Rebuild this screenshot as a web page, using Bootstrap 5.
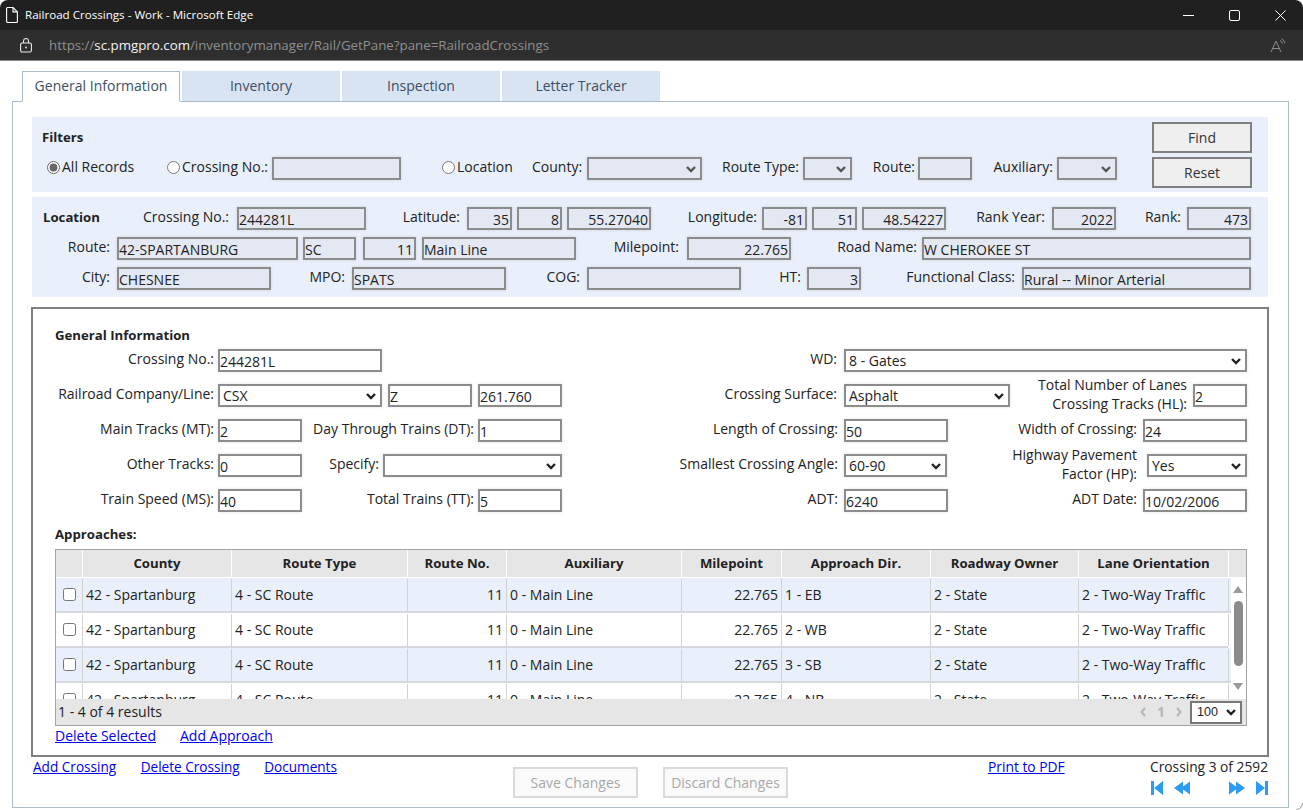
<!DOCTYPE html>
<html lang="en">
<head>
<meta charset="utf-8">
<title>Railroad Crossings</title>
<link rel="stylesheet" href="https://cdn.jsdelivr.net/npm/bootstrap@5.3.0/dist/css/bootstrap.min.css">
<style>
html,body{height:810px;overflow:hidden;background:#fff}
body{font-family:"Open Sans","Liberation Sans",sans-serif;font-size:14px;color:#222;line-height:20px;position:relative}
.titlebar{height:30px;background:#202020;color:#fff;font-size:11.6px;border-radius:8px 8px 0 0;padding:0 0 0 6px}
.titlebar .ttl{margin-left:7px}
.addrbar{height:31px;background:#2e2e2e;border-bottom:1px solid #8a8a8a;color:#8f8f8f;font-size:13.3px;padding:0 16px 0 20px}
.addrbar .url{margin-left:17px}
.addrbar b{font-weight:400;color:#f2f2f2}
.winbtn{width:46px}
.content{padding:10px 14px 0 12px}
.nav-tabs{margin-left:10px;border:0;gap:2px;position:relative;z-index:1;margin-bottom:-1px}
.nav-tabs .nav-link{width:158px;height:31px;margin:0;padding:5px 0 0;text-align:center;background:#d9e4f2;color:#3d4f63;border:0;border-bottom:1px solid #a9bacb;border-radius:0;font-size:14px}
.nav-tabs .nav-link.active{background:#fff;color:#3d4f63;border:1px solid #a9bacb;border-bottom:1px solid #fff;padding-top:4px}
.panel{height:707px;border:1px solid #a9bacb;padding:15px 20px 0 19px}
.block{background:#e9f0fb}
.filters{height:75px;padding:5px 16px 0 15px}
.filters h6{margin:5px 0 10px -5px;font-size:13.2px;font-weight:700;line-height:20px}
.location{height:100px;margin-top:5px;padding:10px 0 0 11px}
.frow{height:23px;margin-bottom:7px}
.grow{height:23px;margin-bottom:12px}
.form-control,.form-select{height:23px;min-height:0;padding:1px 1px 0 0;font-size:14px;line-height:19px;color:#222;border:2px solid #8c8c8c;border-radius:0;background-color:#fff;box-shadow:0 0 3px rgba(0,0,0,.12);flex:none}
.form-select{padding:0 18px 0 3px;background-position:right 3px center;background-size:12px 10px;background-image:url("data:image/svg+xml,%3csvg xmlns='http://www.w3.org/2000/svg' viewBox='0 0 12 10'%3e%3cpath fill='none' stroke='%23222' stroke-width='2.4' d='M2 3l4 4 4-4'/%3e%3c/svg%3e")}
.ro{background-color:#e4e8f3}
.block .form-select{background-color:#e4e8f3;background-image:url("data:image/svg+xml,%3csvg xmlns='http://www.w3.org/2000/svg' viewBox='0 0 12 10'%3e%3cpath fill='none' stroke='%23555' stroke-width='2.4' d='M2 3l4 4 4-4'/%3e%3c/svg%3e")}
label,.lab{flex:none;margin:0;white-space:nowrap;padding-bottom:3px}
.lab{font-size:13.2px;margin-left:0}
.location .frow label{padding-bottom:4px}
.rad{display:flex;align-items:center;gap:2px}
.rad input{margin:0;width:13px;height:13px;accent-color:#666}
.btn-side{display:block;width:100px;height:31px;background:#efefef;color:#333;border:2px solid #808080;border-radius:0;padding:0;font-size:14px;margin-bottom:4px}
.btn-side:hover{background:#efefef;color:#333;border-color:#808080}
.genbox{height:450px;margin:10px -1px 0 -1px;border:2px solid #7f7f7f;padding:16px 0 0 22px}
.genbox h6{font-size:13.2px;font-weight:700;line-height:20px;margin:0 0 4px}
.approach{font-size:13.2px;font-weight:700;line-height:20px;margin:0 0 5px}
.grid{width:1192px;height:177px;border:1px solid #a3a3a3;background:#fff}
.ghead{height:27px;background:#e6e6e6;font-size:13.2px;font-weight:700;margin-bottom:1px}
.ghead>div{height:27px;border-right:1px solid #fff;text-align:center;line-height:27px;flex:none}
.gbody{height:121px;overflow:hidden}
.gtable{width:1172px;flex:none}
.grid-row{height:35px;border-bottom:2px solid #d5d8df;padding-top:1px}
.grid-row.alt{background:#e9f0fb;margin-right:-3px}
.grid-row>div{height:32px;border-right:1px solid #d3d3d3;padding:6px 3px 0;flex:none;white-space:nowrap}
.grid-row input{margin:3px 0 0 4px;width:13px;height:13px}
.c0{width:27px}.c1{width:149px}.c2{width:176px}.c3{width:99px}.c4{width:175px}.c5{width:100px}.c6{width:149px}.c7{width:148px}.c8{width:150px}
.sbar{width:18px;flex:none;padding-top:7px}
.sbar i{display:block;width:9px;height:65px;background:#8b8b8b;border-radius:5px;margin:7px 0 16px 6px}
.sbar svg{display:block;margin-left:5px}
.gfoot{height:26px;background:#e6e6e6;padding:0 4px 0 2px}
.pager{color:#b5b5b5;font-weight:700;width:42px}
.pgsel{width:52px;height:23px;padding:0 14px 0 5px;margin-left:8px;font-family:"Liberation Sans",sans-serif;font-size:12.5px;border-width:2px;border-color:#777;box-shadow:none;line-height:19px}
.sublinks{height:31px;line-height:20px}
a,a:hover{color:#00e}
.bottom{padding-left:1px}
.botlinks{width:480px;gap:24.5px;font-size:13.6px}
.btn-dis,.btn-dis:disabled{width:125px;height:31px;margin-top:10px;background:#fafafa;color:#a8a8a8;border:2px solid #dadada;border-radius:0;padding:0;font-size:14px;opacity:1}
.ml25{margin-left:25px}
.pdf{margin-left:200px;width:161px;font-size:13.8px}
.crossing{width:119px;text-align:right;white-space:nowrap;font-size:13.75px}
.navs{height:14px;margin-top:4px}
.nav1{margin-left:2px}.nav2{margin-left:11px}.nav4{margin-left:11px}
.corner{position:absolute;right:0;bottom:0;width:7px;height:7px;border-right:1px solid #aaa;border-bottom:1px solid #aaa;border-bottom-right-radius:8px}
.w45{width:45px}.w49{width:49px}.w53{width:53px}.w54{width:54px}.w55{width:55px}.w60{width:60px}.w64{width:64px}.w66{width:66px}.w71{width:71px}.w74{width:74px}
.w81{width:81px}.w84{width:84px}.w85{width:85px}.w95{width:95px}.w99{width:99px}.w100{width:100px}.w101{width:101px}.w103{width:103px}.w104{width:104px}.w105{width:105px}.w106{width:106px}.w111{width:111px}.w115{width:115px}
.w120{width:120px}.w129{width:129px}.w131{width:131px}.w154{width:154px}.w161{width:161px}.w163{width:163px}.w164{width:164px}.w166{width:166px}.w176{width:176px}.w179{width:179px}.w181{width:181px}.w183{width:183px}.w195{width:195px}.w200{width:200px}.w229{width:229px}.w282{width:282px}.w329{width:329px}.w403{width:403px}.w462{width:462px}
.ml5{margin-left:5px}.ml6{margin-left:6px}.ml7{margin-left:7px}
.p3r{padding-right:3px}.p4r{padding-right:4px}.p5r{padding-right:5px}.p6r{padding-right:6px}.p7r{padding-right:7px}.p8r{padding-right:8px}.p10r{padding-right:10px}
.two{line-height:19.5px}
.locpad{padding-left:41px}
</style>
</head>
<body>
<div class="titlebar d-flex align-items-center">
  <svg width="12" height="16" viewBox="0 0 12 16" fill="none" stroke="#fff" stroke-width="1.1"><path d="M.6 1.5a1 1 0 0 1 1-1h5.400l4.400 4.400v9.600a1 1 0 0 1-1 1h-8.800a1 1 0 0 1-1-1z"/><path d="M7 .5v4.400h4.400"/></svg>
  <span class="ttl flex-grow-1">Railroad Crossings - Work - Microsoft Edge</span>
  <div class="winbtn text-center"><svg width="11" height="11" viewBox="0 0 11 11" stroke="#fff"><path d="M0 5.500h11"/></svg></div>
  <div class="winbtn text-center"><svg width="11" height="11" viewBox="0 0 11 11" fill="none" stroke="#fff"><rect x=".5" y=".5" width="10" height="10" rx="1.5"/></svg></div>
  <div class="winbtn text-center"><svg width="11" height="11" viewBox="0 0 11 11" stroke="#fff"><path d="M.5.5l10 10M10.500.5l-10 10"/></svg></div>
</div>
<div class="addrbar d-flex align-items-center">
  <svg width="12" height="15" viewBox="0 0 12 15" fill="none" stroke="#e8e8e8" stroke-width="1.1"><rect x=".6" y="5" width="10.800" height="9" rx="1.500"/><path d="M3.500 5V3a2.500 2.500 0 0 1 5 0v2"/><circle cx="6" cy="9.500" r=".9" fill="#e8e8e8" stroke="none"/></svg>
  <span class="url flex-grow-1">https://<b>sc.pmgpro.com</b>/inventorymanager/Rail/GetPane?pane=RailroadCrossings</span>
  <svg width="17" height="15" viewBox="0 0 17 15" fill="none" stroke="#8f8f8f" stroke-width="1"><path d="M1 14L6 3l5 11M2.800 10.500h6.400"/><path d="M10 2.500a4 4 0 0 1 2.500 3M11.500 .8a6 6 0 0 1 3.500 4.500"/></svg>
</div>
<div class="content">
  <ul class="nav nav-tabs">
    <li class="nav-item"><a class="nav-link active" href="#">General Information</a></li>
    <li class="nav-item"><a class="nav-link" href="#">Inventory</a></li>
    <li class="nav-item"><a class="nav-link" href="#">Inspection</a></li>
    <li class="nav-item"><a class="nav-link" href="#">Letter Tracker</a></li>
  </ul>
  <div class="panel">
    <div class="block filters d-flex">
      <div class="flex-grow-1">
        <h6>Filters</h6>
        <div class="d-flex align-items-center">
          <label class="rad w120"><input type="radio" name="f" checked>All Records</label>
          <label class="rad w105"><input type="radio" name="f">Crossing No.:</label>
          <input class="form-control ro w129" type="text">
          <label class="rad w131 locpad"><input type="radio" name="f">Location</label>
          <label class="w55">County:</label>
          <select class="form-select w115"><option></option></select>
          <label class="w101 text-end p4r">Route Type:</label>
          <select class="form-select w49"><option></option></select>
          <label class="w66 text-end p3r">Route:</label>
          <input class="form-control ro w54" type="text">
          <label class="w85 text-end p4r">Auxiliary:</label>
          <select class="form-select w60"><option></option></select>
        </div>
      </div>
      <div>
        <button class="btn btn-side" type="button">Find</button>
        <button class="btn btn-side" type="button">Reset</button>
      </div>
    </div>
    <div class="block location">
      <div class="frow d-flex align-items-center">
        <b class="lab w99">Location</b>
        <label class="w95 text-end p8r">Crossing No.:</label><input class="form-control ro w129" value="244281L">
        <label class="w101 text-end p7r">Latitude:</label><input class="form-control ro w45 text-end" value="35"><input class="form-control ro w45 text-end ml5" value="8"><input class="form-control ro w84 text-end ml5" value="55.27040">
        <label class="w111 text-end p5r">Longitude:</label><input class="form-control ro w45 text-end" value="-81"><input class="form-control ro w45 text-end ml5" value="51"><input class="form-control ro w84 text-end ml5" value="48.54227">
        <label class="w106 text-end p7r">Rank Year:</label><input class="form-control ro w64 text-end" value="2022">
        <label class="w71 text-end p6r">Rank:</label><input class="form-control ro w64 text-end" value="473">
      </div>
      <div class="frow d-flex align-items-center">
        <label class="w74 text-end p7r">Route:</label><input class="form-control ro w181" value="42-SPARTANBURG"><input class="form-control ro w53 ml5" value="SC"><input class="form-control ro w53 ml7 text-end" value="11"><input class="form-control ro w154 ml6" value="Main Line">
        <label class="w111 text-end p8r">Milepoint:</label><input class="form-control ro w104 text-end" value="22.765">
        <label class="w131 text-end p5r">Road Name:</label><input class="form-control ro w329" value="W CHEROKEE ST">
      </div>
      <div class="frow d-flex align-items-center">
        <label class="w74 text-end p7r">City:</label><input class="form-control ro w154" value="CHESNEE">
        <label class="w81 text-end p7r">MPO:</label><input class="form-control ro w154" value="SPATS">
        <label class="w81 text-end p7r">COG:</label><input class="form-control ro w154" value="">
        <label class="w66 text-end p6r">HT:</label><input class="form-control ro w54 text-end" value="3">
        <label class="w161 text-end p7r">Functional Class:</label><input class="form-control ro w229" value="Rural -- Minor Arterial">
      </div>
    </div>
    <div class="genbox">
      <h6>General Information</h6>
      <div class="grow d-flex align-items-center">
        <label class="w163 text-end p4r">Crossing No.:</label><input class="form-control w164" value="244281L">
        <label class="w462 text-end p7r">WD:</label><select class="form-select w403"><option>8 - Gates</option></select>
      </div>
      <div class="grow d-flex align-items-center">
        <label class="w163 text-end p4r">Railroad Company/Line:</label><select class="form-select w164"><option>CSX</option></select><input class="form-control w84 ml6" value="Z"><input class="form-control w84 ml6" value="261.760">
        <label class="w282 text-end p7r">Crossing Surface:</label><select class="form-select w166"><option>Asphalt</option></select>
        <label class="w183 text-end p6r two">Total Number of Lanes<br>Crossing Tracks (HL):</label><input class="form-control w54" value="2">
      </div>
      <div class="grow d-flex align-items-center">
        <label class="w163 text-end p4r">Main Tracks (MT):</label><input class="form-control w84" value="2">
        <label class="w176 text-end p4r">Day Through Trains (DT):</label><input class="form-control w84" value="1">
        <label class="w282 text-end p6r">Length of Crossing:</label><input class="form-control w104" value="50">
        <label class="w195 text-end p6r">Width of Crossing:</label><input class="form-control w104" value="24">
      </div>
      <div class="grow d-flex align-items-center">
        <label class="w163 text-end p4r">Other Tracks:</label><input class="form-control w84" value="0">
        <label class="w81 text-end p4r">Specify:</label><select class="form-select w179"><option></option></select>
        <label class="w282 text-end p6r">Smallest Crossing Angle:</label><select class="form-select w103"><option>60-90</option></select>
        <label class="w200 text-end p10r two">Highway Pavement<br>Factor (HP):</label><select class="form-select w100"><option>Yes</option></select>
      </div>
      <div class="grow d-flex align-items-center">
        <label class="w163 text-end p4r">Train Speed (MS):</label><input class="form-control w84" value="40">
        <label class="w176 text-end p4r">Total Trains (TT):</label><input class="form-control w84" value="5">
        <label class="w282 text-end p6r">ADT:</label><input class="form-control w104" value="6240">
        <label class="w195 text-end p6r">ADT Date:</label><input class="form-control w104" value="10/02/2006">
      </div>
      <div class="approach">Approaches:</div>
      <div class="grid">
        <div class="ghead d-flex">
          <div class="c0"></div><div class="c1">County</div><div class="c2">Route Type</div><div class="c3">Route No.</div><div class="c4">Auxiliary</div><div class="c5">Milepoint</div><div class="c6">Approach Dir.</div><div class="c7">Roadway Owner</div><div class="c8">Lane Orientation</div>
        </div>
        <div class="gbody d-flex">
          <div class="gtable">
            <div class="grid-row alt d-flex"><div class="c0"><input type="checkbox"></div><div class="c1">42 - Spartanburg</div><div class="c2">4 - SC Route</div><div class="c3 text-end">11</div><div class="c4">0 - Main Line</div><div class="c5 text-end">22.765</div><div class="c6">1 - EB</div><div class="c7">2 - State</div><div class="c8">2 - Two-Way Traffic</div></div>
            <div class="grid-row d-flex"><div class="c0"><input type="checkbox"></div><div class="c1">42 - Spartanburg</div><div class="c2">4 - SC Route</div><div class="c3 text-end">11</div><div class="c4">0 - Main Line</div><div class="c5 text-end">22.765</div><div class="c6">2 - WB</div><div class="c7">2 - State</div><div class="c8">2 - Two-Way Traffic</div></div>
            <div class="grid-row alt d-flex"><div class="c0"><input type="checkbox"></div><div class="c1">42 - Spartanburg</div><div class="c2">4 - SC Route</div><div class="c3 text-end">11</div><div class="c4">0 - Main Line</div><div class="c5 text-end">22.765</div><div class="c6">3 - SB</div><div class="c7">2 - State</div><div class="c8">2 - Two-Way Traffic</div></div>
            <div class="grid-row d-flex"><div class="c0"><input type="checkbox"></div><div class="c1">42 - Spartanburg</div><div class="c2">4 - SC Route</div><div class="c3 text-end">11</div><div class="c4">0 - Main Line</div><div class="c5 text-end">22.765</div><div class="c6">4 - NB</div><div class="c7">2 - State</div><div class="c8">2 - Two-Way Traffic</div></div>
          </div>
          <div class="sbar">
            <svg width="10" height="9" viewBox="0 0 10 9"><path d="M5 1l5 7H0z" fill="#9a9a9a"/></svg>
            <i></i>
            <svg width="10" height="9" viewBox="0 0 10 9"><path d="M0 1h10L5 8z" fill="#9a9a9a"/></svg>
          </div>
        </div>
        <div class="gfoot d-flex align-items-center justify-content-between">
          <span>1 - 4 of 4 results</span>
          <div class="d-flex align-items-center">
            <div class="pager d-flex justify-content-between align-items-center">
              <svg width="6" height="10" viewBox="0 0 6 10" fill="none" stroke="#b5b5b5" stroke-width="2"><path d="M5 1L1.500 5 5 9"/></svg>
              <span>1</span>
              <svg width="6" height="10" viewBox="0 0 6 10" fill="none" stroke="#b5b5b5" stroke-width="2"><path d="M1 1l3.500 4L1 9"/></svg>
            </div>
            <select class="form-select pgsel"><option>100</option></select>
          </div>
        </div>
      </div>
      <div class="sublinks d-flex gap-4"><a href="#">Delete Selected</a><a href="#">Add Approach</a></div>
    </div>
    <div class="bottom d-flex align-items-start">
      <div class="botlinks d-flex"><a href="#">Add Crossing</a><a href="#">Delete Crossing</a><a href="#">Documents</a></div>
      <button class="btn btn-dis" type="button" disabled>Save Changes</button>
      <button class="btn btn-dis ml25" type="button" disabled>Discard Changes</button>
      <a class="pdf" href="#">Print to PDF</a>
      <div class="crossing">
        <div>Crossing 3 of 2592</div>
        <div class="navs d-flex">
          <svg class="nav1" width="12" height="14" viewBox="0 0 12 14" fill="#2b9cf2"><rect width="3" height="14"/><path d="M3 7l9-7v14z"/></svg>
          <svg class="nav2" width="16" height="14" viewBox="0 0 16 14" fill="#2b9cf2"><path d="M0 7l9-6.500v13zM7 7l9-6.500v13z"/></svg>
          <svg class="ms-auto" width="16" height="14" viewBox="0 0 16 14" fill="#2b9cf2"><path d="M0 .5L9 7l-9 6.500zM7 .5L16 7l-9 6.500z"/></svg>
          <svg class="nav4" width="12" height="14" viewBox="0 0 12 14" fill="#2b9cf2"><path d="M0 0l9 7-9 7z"/><rect x="9" width="3" height="14"/></svg>
        </div>
      </div>
    </div>
  </div>
</div>
<div class="corner"></div>
<script src="https://cdn.jsdelivr.net/npm/bootstrap@5.3.0/dist/js/bootstrap.bundle.min.js"></script>
</body>
</html>
